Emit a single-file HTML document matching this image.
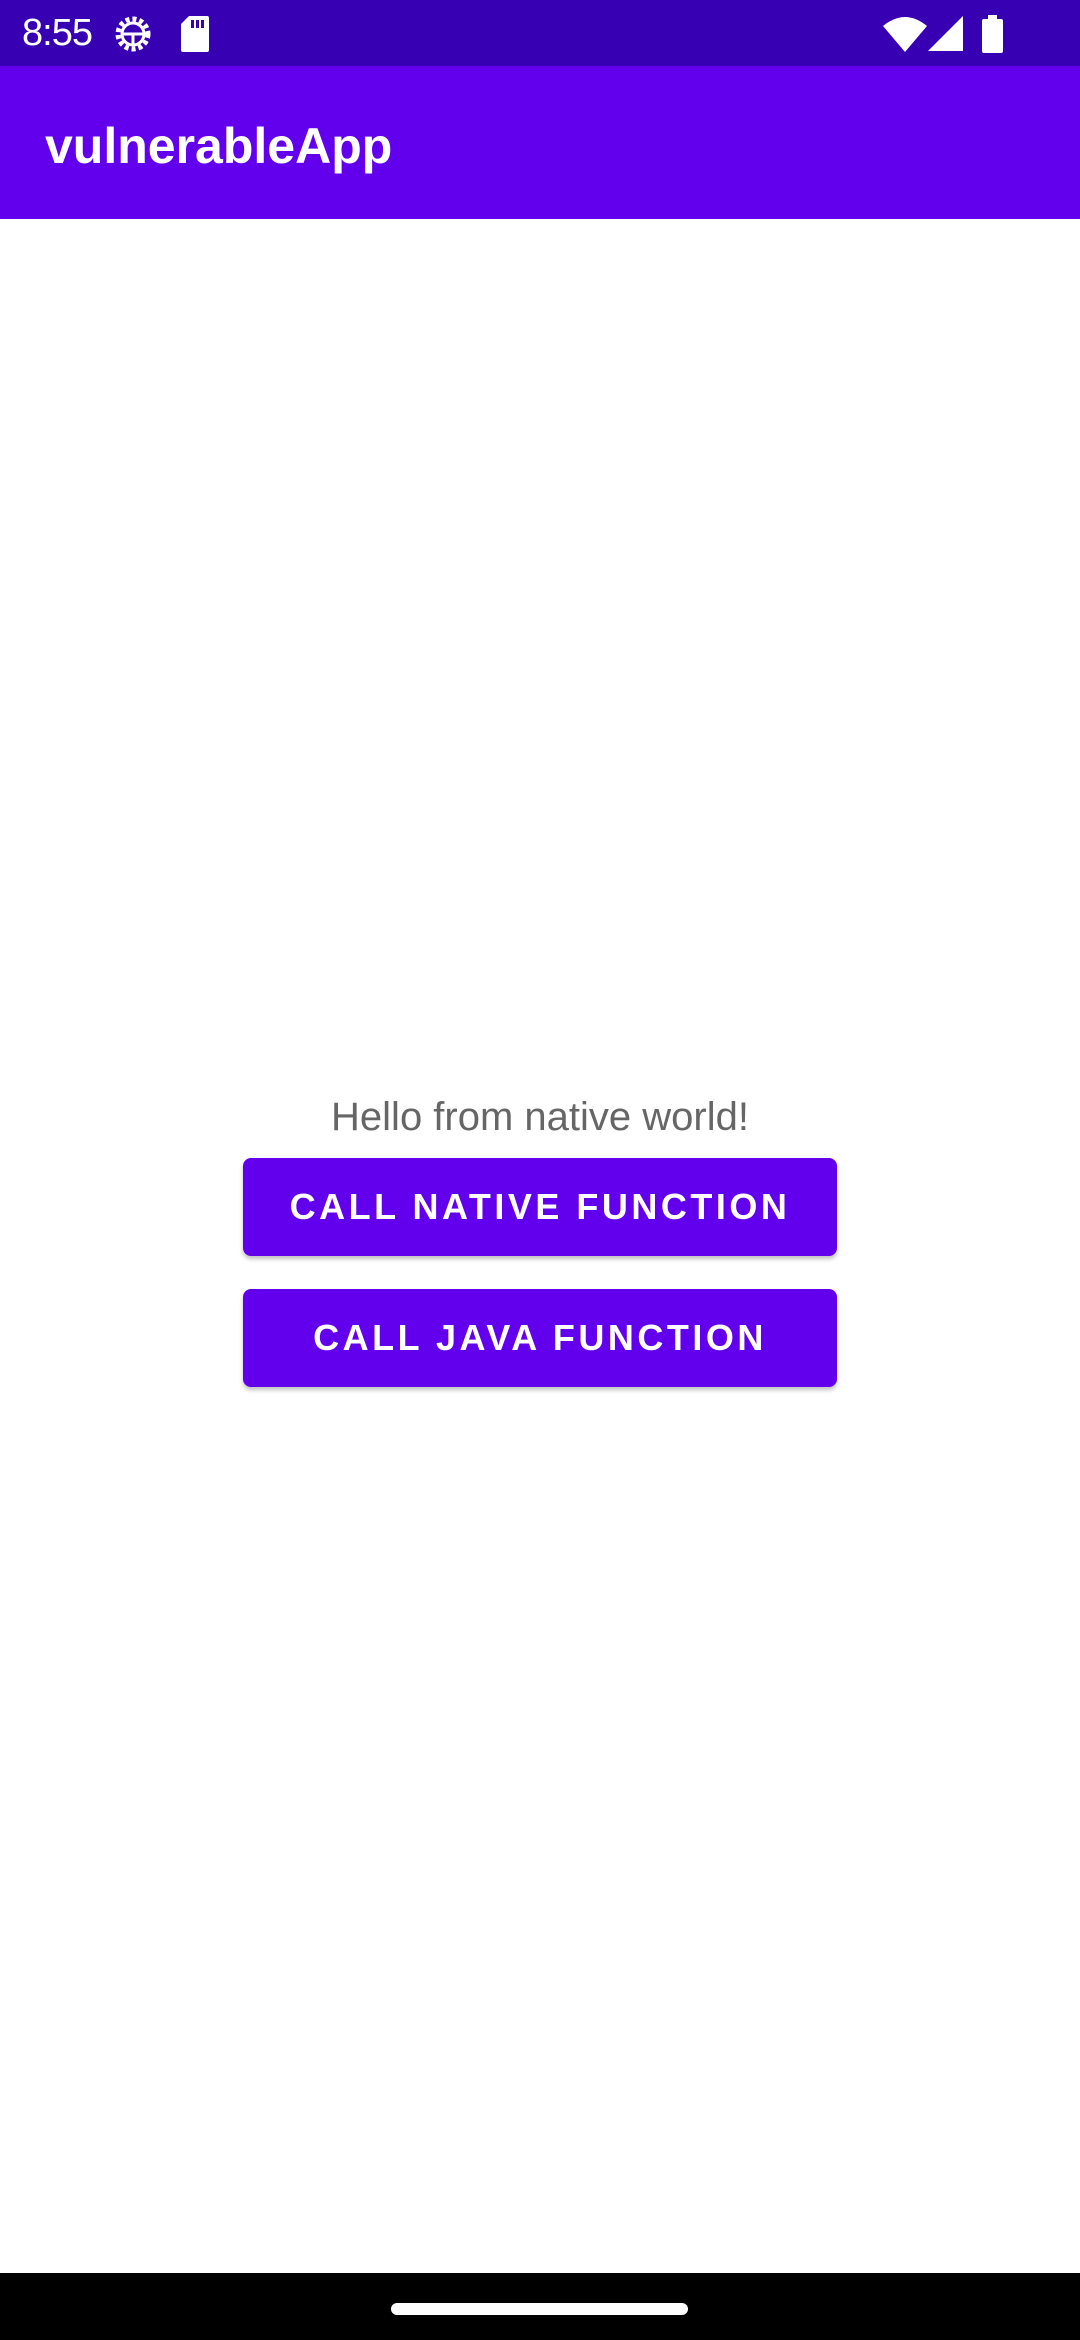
<!DOCTYPE html>
<html><head><meta charset="utf-8"><style>
html,body{margin:0;padding:0;width:1080px;height:2340px;overflow:hidden;background:#fff;font-family:"Liberation Sans",sans-serif;}
#sb{position:absolute;left:0;top:0;width:1080px;height:66px;background:#3700B3;color:#fff;}
#time{position:absolute;left:22px;top:12px;font-size:38px;letter-spacing:-1px;}
#ab{position:absolute;left:0;top:66px;width:1080px;height:153px;background:#6200EE;}
#title{position:absolute;left:45px;top:54px;font-size:50px;color:#fff;font-weight:bold;line-height:52px;}
#hello{position:absolute;left:0;width:1080px;top:1095px;text-align:center;font-size:40px;color:#666;}
.btn{position:absolute;left:243px;width:594px;height:98px;background:#6200EE;border-radius:8px;color:#fff;text-align:center;line-height:98px;font-size:36px;font-weight:bold;letter-spacing:3.5px;box-shadow:0 3px 4px rgba(0,0,0,0.25);}
#nav{position:absolute;left:0;top:2273px;width:1080px;height:67px;background:#000;}
#handle{position:absolute;left:391px;top:30px;width:297px;height:12px;border-radius:6px;background:#fff;}
</style></head><body>
<div id="sb">
<div id="time">8:55</div>
<svg style="position:absolute;left:110px;top:14px" width="46" height="40" viewBox="0 0 46 40"><circle cx="23" cy="20" r="15" fill="none" stroke="#fff" stroke-width="5" stroke-dasharray="4 3"/><circle cx="23" cy="20" r="11" fill="none" stroke="#fff" stroke-width="3"/><line x1="12" y1="20" x2="34" y2="20" stroke="#fff" stroke-width="3"/><line x1="23" y1="20" x2="23" y2="31" stroke="#fff" stroke-width="3"/></svg>
<svg style="position:absolute;left:181px;top:16px" width="28" height="36" viewBox="0 0 28 36"><path d="M8 0H26a2 2 0 0 1 2 2V34a2 2 0 0 1-2 2H2a2 2 0 0 1-2-2V8Z" fill="#fff"/><rect x="10" y="4" width="3" height="8" fill="#3700B3"/><rect x="15" y="4" width="3" height="8" fill="#3700B3"/><rect x="20" y="4" width="3" height="8" fill="#3700B3"/></svg>
<svg style="position:absolute;left:883px;top:16px" width="44" height="36" viewBox="0 0 44 36"><path d="M0 10Q22 -8 44 10L22 36Z" fill="#fff"/></svg>
<svg style="position:absolute;left:928px;top:16px" width="35" height="35" viewBox="0 0 35 35"><path d="M35 0V35H0Z" fill="#fff"/></svg>
<svg style="position:absolute;left:982px;top:15px" width="21" height="38" viewBox="0 0 21 38"><rect x="6" y="0" width="9" height="4" fill="#fff"/><rect x="0" y="4" width="21" height="34" rx="2" fill="#fff"/></svg>
</div>
<div id="ab"><div id="title">vulnerableApp</div></div>
<div id="hello">Hello from native world!</div>
<div class="btn" style="top:1158px">CALL NATIVE FUNCTION</div>
<div class="btn" style="top:1289px">CALL JAVA FUNCTION</div>
<div id="nav"><div id="handle"></div></div>
</body></html>
